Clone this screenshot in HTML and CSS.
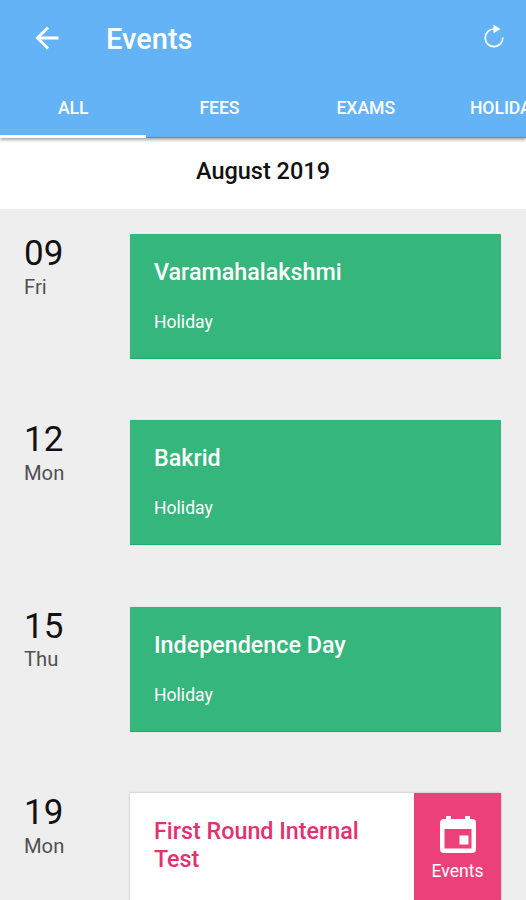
FILE: index.html
```html
<!DOCTYPE html>
<html lang="en">
<head>
<meta charset="utf-8">
<title>Events</title>
<link rel="stylesheet" href="styles.css">
</head>
<body>
<header class="appbar">
  <div class="toolbar">
    <svg class="back" viewBox="0 0 24 24"><path d="M23.5 12H2.5M13 1.5L2.5 12L13 22.5"/></svg>
    <h1>Events</h1>
    <svg class="refresh" viewBox="0 0 22 24"><path class="arc" d="M19.800 13.5A8.800 8.800 0 1 1 11 5"/><path class="tip" d="M10.5 0.8L17.5 5L10.5 9.2z"/></svg>
  </div>
  <nav class="tabs">
    <span class="tab active">ALL</span><span class="tab">FEES</span><span class="tab">EXAMS</span><span class="tab">HOLIDAYS</span>
  </nav>
</header>
<h2 class="month">August 2019</h2>
<main>
  <section class="row"><div class="date"><b>09</b><span>Fri</span></div><article class="card"><h3>Varamahalakshmi</h3><p>Holiday</p></article></section>
  <section class="row"><div class="date"><b>12</b><span>Mon</span></div><article class="card"><h3>Bakrid</h3><p>Holiday</p></article></section>
  <section class="row"><div class="date"><b>15</b><span>Thu</span></div><article class="card"><h3>Independence Day</h3><p>Holiday</p></article></section>
  <section class="row last"><div class="date"><b>19</b><span>Mon</span></div><article class="card event"><h3>First Round Internal Test</h3><div class="kind"><svg viewBox="0 0 36 38"><path fill-rule="evenodd" d="M6 1h5v3h14V1h5v3h2q4 0 4 4v26q0 4-4 4H4q-4 0-4-4V8q0-4 4-4h2zM4.500 14v19.500h27V14zM19.500 20.500h9v9h-9z"/></svg><span>Events</span></div></article></section>
</main>
</body>
</html>
```
FILE: styles.css
```css
* { box-sizing: border-box; margin: 0; padding: 0; }
body { width: 526px; height: 900px; overflow: hidden; background: #eee; font-family: Roboto, sans-serif; color: #111; }
.appbar { position: relative; height: 138px; background: #64b3f6; color: #fff; box-shadow: inset 0 -2px 1px -1px #4a8fca, 0 2px 3px #0005; }
.toolbar { height: 77px; display: flex; align-items: center; padding: 0 21px 0 35px; }
.back { width: 24px; height: 24px; margin-top: -1px; fill: none; stroke: #fff; stroke-width: 2.9; }
h1 { font-size: 29px; font-weight: 500; margin-left: 47px; flex: 1; }
.refresh { width: 22px; height: 24px; margin-top: -5px; }
.arc { fill: none; stroke: #fff; stroke-width: 1.7; }
.tip { fill: #fff; }
.tabs { display: flex; height: 61px; overflow: hidden; }
.tab { flex: 0 0 146.3px; text-align: center; font-size: 17.6px; font-weight: 500; line-height: 63px; letter-spacing: -0.05px; }
.tab:last-child { flex-basis: 144px; }
.active { border-bottom: 3px solid #fff; }
.month { height: 71px; background: #fff; text-align: center; font-size: 23.5px; font-weight: 500; line-height: 67px; }
main { height: 691px; padding: 25px 25px 0 24px; overflow: hidden; }
.row { display: flex; height: 186.4px; }
.last { height: 107px; }
.date { width: 106px; }
.date b { display: block; font-size: 35px; font-weight: 400; line-height: 39.6px; }
.date span { display: block; font-size: 20.2px; line-height: 26px; color: #505050; }
.card { flex: 1; height: 125px; background: #35b67c; color: #fff; padding: 24px; border-radius: 1px; box-shadow: 0 0 1px #0004, inset 0 -1px #1fac6b; }
h3 { font-size: 23.3px; font-weight: 500; line-height: 28px; }
.card p { font-size: 17.6px; line-height: 24px; margin-top: 24px; }
.event { display: flex; height: 107px; background: #fff; color: #e5306f; padding: 0; box-shadow: 0 0 2px #0005; }
.event h3 { flex: 1; padding: 24px; }
.kind { width: 87px; background: #ec407a; color: #fff; text-align: center; font-size: 17.6px; line-height: 22px; padding-top: 22px; }
.kind svg { display: block; width: 36px; height: 38px; margin: 0 auto 7px; fill: #fff; }
```
